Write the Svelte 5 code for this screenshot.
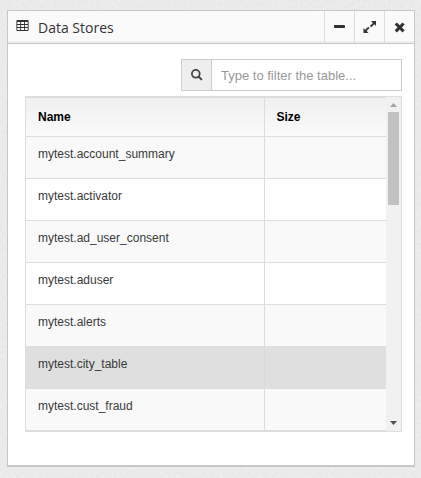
<script>
  const rows = ['account_summary', 'activator', 'ad_user_consent', 'aduser', 'alerts', 'city_table', 'cust_fraud'];
  const selected = 'city_table';
</script>

<main>
  <svg class="texture" aria-hidden="true">
    <filter id="paper">
      <feTurbulence type="fractalNoise" baseFrequency="0.35" numOctaves="2" />
      <feColorMatrix values="0 0 0 0 0  0 0 0 0 0  0 0 0 0 0  0.07 0 0 0 -0.02" color-interpolation-filters="sRGB" />
    </filter>
    <rect width="100%" height="100%" filter="url(#paper)" />
  </svg>
  <section class="panel">
    <header>
      <svg class="grid-icon" viewBox="0 0 13 12" width="13" height="12">
        <path fill="#333" fill-rule="evenodd" d="M1.4 0h10.2q1 0 1 1v9q0 1-1 1H1.4q-1 0-1-1V1q0-1 1-1zM1.3 2v2h2.9V2zM5.1 2v2H8V2zM8.9 2v2h2.8V2zM1.3 5v2h2.9V5zM5.1 5v2H8V5zM8.9 5v2h2.8V5zM1.3 8v2h2.9V8zM5.1 8v2H8V8zM8.9 8v2h2.8V8z" />
      </svg>
      <h2>Data Stores</h2>
      <button aria-label="Minimize">
        <svg viewBox="0 0 29 32" width="29" height="32"><rect x="9" y="14" width="11" height="3" rx=".8" fill="#333" /></svg>
      </button>
      <button aria-label="Expand">
        <svg viewBox="0 0 29 32" width="29" height="32">
          <path fill="#333" d="M16 10h5v5l-1.7-1.7-3 3-1.4-1.4 3-3zM8.5 22v-5l1.7 1.7 3-3 1.4 1.4-3 3 1.9 1.9z" />
        </svg>
      </button>
      <button aria-label="Close">
        <svg viewBox="0 0 29 32" width="29" height="32">
          <path stroke="#333" stroke-width="3.1" d="M10.8 12.5l7.8 7.8M18.6 12.5l-7.8 7.8" />
        </svg>
      </button>
    </header>
    <div class="content">
      <label class="filter">
        <span class="addon">
          <svg viewBox="0 0 12 12" width="12" height="12">
            <circle cx="4.8" cy="4.8" r="3.9" fill="none" stroke="#444" stroke-width="1.8" />
            <path d="M7.7 7.7l2.7 2.7" stroke="#444" stroke-width="2" stroke-linecap="round" />
          </svg>
        </span>
        <input type="text" placeholder="Type to filter the table..." />
      </label>
      <div class="table-wrap">
        <div class="table">
          <div class="row head"><span>Name</span><span>Size</span></div>
          {#each rows as row}
            <div class="row" class:selected={row === selected}><span>mytest.{row}</span><span></span></div>
          {/each}
        </div>
        <div class="scrollbar">
          <svg viewBox="0 0 15 15" width="15" height="15"><path d="M4 10l3.5-4 3.5 4z" fill="#a3a3a3" /></svg>
          <div class="thumb"></div>
          <svg viewBox="0 0 15 15" width="15" height="15"><path d="M4 5l3.5 4 3.5-4z" fill="#505050" /></svg>
        </div>
      </div>
    </div>
  </section>
</main>

<style>
  :global(body) { margin: 0; background: #eee; }
  * { box-sizing: border-box; }
  main {
    position: relative;
    height: 478px;
    padding: 10px 6px 11px 7px;
    background: #f2f2f2;
    overflow: hidden;
    font: 12px/18px "Liberation Sans", Arial, sans-serif;
    color: #393939;
  }
  .texture { position: absolute; inset: 0; width: 100%; height: 100%; }
  svg { display: block; }
  .panel {
    position: relative;
    height: 457px;
    border: 1px solid #c8c8c8;
    border-bottom-width: 2px;
    background: #fff;
  }
  header {
    display: flex;
    height: 33px;
    border-bottom: 1px solid #c8c8c8;
    background: #fafafa;
    box-shadow: inset 0 -2px 0 rgba(0, 0, 0, 0.05);
  }
  .grid-icon { margin: 9px 0 0 8px; }
  h2 {
    flex: 1;
    margin: 0 0 0 9px;
    font: 400 14px/34px "Open Sans", sans-serif;
    color: #333;
  }
  button {
    width: 30px;
    height: 32px;
    padding: 0;
    border: 0;
    border-left: 1px solid #ddd;
    background: none;
  }
  .content { padding: 15px 12px 0 17px; }
  .filter {
    display: flex;
    width: 221px;
    height: 32px;
    margin-left: auto;
    border: 1px solid #ccc;
  }
  .addon {
    flex: none;
    width: 30px;
    padding: 9px 0 0 9px;
    border-right: 1px solid #ccc;
    background: #eee;
  }
  input {
    flex: 1;
    min-width: 0;
    padding: 1px 9px 0;
    border: 0;
    outline: 0;
    background: #fff;
    font: 13px/18px "Liberation Sans", Arial, sans-serif;
  }
  input::placeholder { color: #999; opacity: 1; }
  .table-wrap {
    display: flex;
    height: 336px;
    margin-top: 5px;
    border: 1px solid #ddd;
  }
  .table { flex: 1; border-top: 1px solid #ddd; }
  .row {
    display: flex;
    height: 42px;
    border-bottom: 1px solid #ddd;
    background: #fff;
  }
  .row:nth-child(even) { background: #f9f9f9; }
  .row span { padding: 8px 12px; }
  .row span:first-child { width: 238px; }
  .row span:last-child { flex: 1; padding-left: 11.4px; border-left: 1px solid #ddd; }
  .row.head {
    height: 39px;
    background: linear-gradient(#f0f0f0, #fafafa);
    font-weight: 700;
    color: #000;
  }
  .row.head span { padding-top: 10px; }
  .row.selected { background: #dfdfdf; border-color: #ddd; }
  .row.selected span:last-child { border-color: #d9d9d9; }
  .scrollbar {
    display: flex;
    flex-direction: column;
    width: 15px;
    background: #f1f1f1;
  }
  .thumb { width: 11px; height: 93px; margin: 0 2px auto; background: #c1c1c1; }
</style>
